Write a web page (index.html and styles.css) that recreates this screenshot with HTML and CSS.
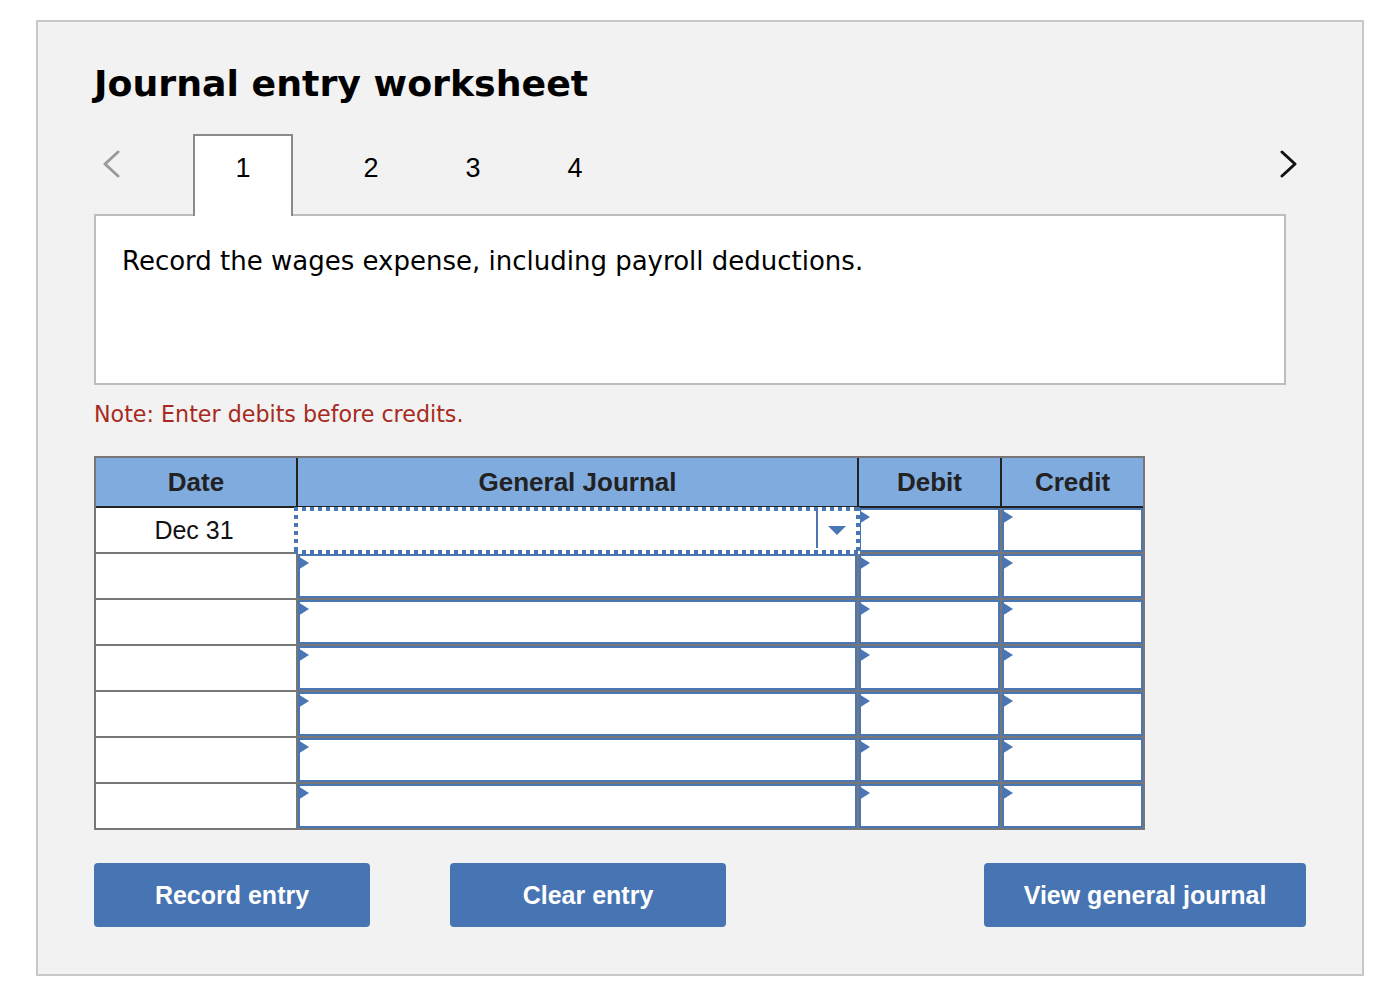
FILE: index.html
```html
<!DOCTYPE html>
<html lang="en">
<head>
<meta charset="utf-8">
<title>Journal entry worksheet</title>
<link rel="stylesheet" href="styles.css">
</head>
<body>
<div class="panel">
  <h1 class="title">Journal entry worksheet</h1>

  <div class="tabs">
    <div class="nav nav-prev">
      <svg width="20" height="28" viewBox="0 0 20 28"><polyline points="17,2 4,14 17,26" fill="none" stroke="#9a9a9a" stroke-width="3" stroke-linecap="round" stroke-linejoin="round"/></svg>
    </div>
    <div class="tab tab-active">1</div>
    <div class="tab">2</div>
    <div class="tab">3</div>
    <div class="tab">4</div>
    <div class="spacer"></div>
    <div class="nav nav-next">
      <svg width="20" height="28" viewBox="0 0 20 28"><polyline points="3,2 16,14 3,26" fill="none" stroke="#111" stroke-width="3" stroke-linecap="round" stroke-linejoin="round"/></svg>
    </div>
  </div>

  <div class="prompt">Record the wages expense, including payroll deductions.</div>

  <p class="note">Note: Enter debits before credits.</p>

  <div class="journal">
    <div class="jhead">
      <div class="hcell">Date</div>
      <div class="hcell">General Journal</div>
      <div class="hcell">Debit</div>
      <div class="hcell">Credit</div>
    </div>
    <div class="jbody">
      <div class="cell-date">Dec 31</div>
      <div class="cell-focus"><div class="dd"><span class="dd-arrow"></span></div></div>
      <div class="cell-in"></div>
      <div class="cell-in"></div>

      <div class="cell-date"></div>
      <div class="cell-in"></div>
      <div class="cell-in"></div>
      <div class="cell-in"></div>

      <div class="cell-date"></div>
      <div class="cell-in"></div>
      <div class="cell-in"></div>
      <div class="cell-in"></div>

      <div class="cell-date"></div>
      <div class="cell-in"></div>
      <div class="cell-in"></div>
      <div class="cell-in"></div>

      <div class="cell-date"></div>
      <div class="cell-in"></div>
      <div class="cell-in"></div>
      <div class="cell-in"></div>

      <div class="cell-date"></div>
      <div class="cell-in"></div>
      <div class="cell-in"></div>
      <div class="cell-in"></div>

      <div class="cell-date"></div>
      <div class="cell-in"></div>
      <div class="cell-in"></div>
      <div class="cell-in"></div>
    </div>
  </div>

  <div class="actions">
    <button class="btn btn-record">Record entry</button>
    <button class="btn btn-clear">Clear entry</button>
    <button class="btn btn-view">View general journal</button>
  </div>
</div>
</body>
</html>
```

FILE: styles.css
```css
* { box-sizing: border-box; }

html, body {
  margin: 0;
  padding: 0;
  background: #ffffff;
}

body {
  font-family: "DejaVu Sans", Verdana, sans-serif;
  color: #000;
}

.panel {
  margin: 20px 0 0 36px;
  width: 1328px;
  height: 956px;
  border: 2px solid #c8c8c8;
  background: #f2f2f2;
  padding: 40px 0 0 56px;
}

.title {
  margin: 0;
  font-family: "DejaVu Sans", Verdana, sans-serif;
  font-weight: bold;
  font-size: 36.3px;
  line-height: 44px;
  color: #000;
}

.tabs {
  display: flex;
  align-items: flex-start;
  height: 80px;
  margin-top: 28px;
}

.nav {
  height: 28px;
  margin-top: 16px;
}

.nav svg { display: block; }

.nav-prev {
  width: 99px;
  padding-left: 7px;
}

.nav-next {
  width: 20px;
  margin-right: 63px;
}

.spacer { flex: 1; }

.tab {
  width: 102px;
  height: 82px;
  border: 2px solid transparent;
  border-bottom: none;
  font-family: "Liberation Sans", Arial, sans-serif;
  font-size: 27px;
  line-height: 64px;
  text-align: center;
  color: #000;
}

.tab-active {
  width: 100px;
  margin-right: 27px;
  background: #fff;
  border-color: #8a8a8a;
  position: relative;
  z-index: 1;
}

.prompt {
  width: 1192px;
  height: 171px;
  background: #fff;
  border: 2px solid #bdbdbd;
  padding: 29px 0 0 26px;
  font-size: 26px;
  line-height: 32px;
  color: #000;
}

.note {
  margin: 15px 0 0 0;
  font-size: 22.2px;
  line-height: 28px;
  color: #a72a20;
}

.journal {
  margin-top: 28px;
  width: 1051px;
  border: 2px solid #777;
  background: #777;
  font-family: "Liberation Sans", Arial, sans-serif;
}

.jhead,
.jbody {
  display: grid;
  grid-template-columns: 200px 559px 141px 141px;
  column-gap: 2px;
}

.jhead {
  background: #222;
  border-bottom: 2px solid #222;
}

.hcell {
  height: 48px;
  background: #80abdf;
  display: flex;
  align-items: center;
  justify-content: center;
  font-weight: bold;
  font-size: 26px;
  color: #222;
}

.jbody {
  grid-auto-rows: 44px;
  row-gap: 2px;
}

.cell-date {
  background: #fff;
  display: flex;
  align-items: center;
  justify-content: center;
  font-size: 25px;
  color: #111;
  padding-right: 4px;
}

.cell-in {
  background: #fff;
  border: 2px solid #4a77b4;
  position: relative;
}

.cell-in::before {
  content: "";
  position: absolute;
  left: -2px;
  top: 0;
  width: 0;
  height: 0;
  border-left: 11px solid #4a77b4;
  border-top: 7px solid transparent;
  border-bottom: 7px solid transparent;
}

.cell-focus {
  margin: -1px -3px -2px -4px;
  padding: 4px 0 6px 4px;
  position: relative;
  z-index: 1;
  display: flex;
  justify-content: flex-end;
  background:
    linear-gradient(90deg, #4a77b4 50%, transparent 50%) left top / 8px 4px repeat-x,
    linear-gradient(90deg, #4a77b4 50%, transparent 50%) left bottom / 8px 4px repeat-x,
    linear-gradient(180deg, #4a77b4 50%, transparent 50%) left top / 4px 8px repeat-y,
    linear-gradient(180deg, #4a77b4 50%, transparent 50%) right top / 4px 8px repeat-y,
    #fff;
}

.dd {
  width: 44px;
  margin-right: 0;
  border-left: 2px solid #4a77b4;
  display: flex;
  align-items: center;
  justify-content: center;
  padding-right: 4px;
}

.dd-arrow {
  width: 0;
  height: 0;
  border-top: 9px solid #4a77b4;
  border-left: 9px solid transparent;
  border-right: 9px solid transparent;
  margin-top: 2px;
}

.actions {
  display: flex;
  width: 1212px;
  margin-top: 33px;
}

.btn {
  height: 64px;
  border: none;
  border-radius: 4px;
  background: #4774b2;
  color: #fff;
  font-family: "Liberation Sans", Arial, sans-serif;
  font-weight: bold;
  font-size: 25px;
  padding: 0;
  cursor: pointer;
}

.btn-record { width: 276px; }
.btn-clear { width: 276px; margin-left: 80px; }
.btn-view { width: 322px; margin-left: auto; }
```
